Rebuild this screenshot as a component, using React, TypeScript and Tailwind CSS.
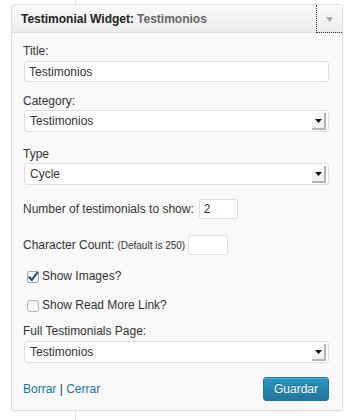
import React from "react";

const font = { fontFamily: '"Liberation Sans", Arial, Helvetica, sans-serif' };

function SelectBox({ value }: { value: string }) {
  return (
    <div className="relative h-[22px] w-full rounded-[3px] border border-[#dfdfdf] bg-white">
      <span className="absolute left-[5px] top-[3px] text-[12px] leading-[15px] text-[#333]">{value}</span>
      <span className="absolute right-[2px] top-[2px] bottom-[1px] flex w-[14px] items-center justify-center border-r-2 border-b-2 border-[#b5b5b5] bg-gradient-to-b from-[#ffffff] to-[#efefef]">
        <svg width="7" height="4" viewBox="0 0 7 4">
          <path d="M0 0 L7 0 L3.5 4 Z" fill="#111" />
        </svg>
      </span>
    </div>
  );
}

export default function App() {
  return (
    <div className="flex h-[420px] w-[354px] flex-col bg-white" style={font}>
      <div className="ml-[75px] h-[4px] shrink-0 border-l border-[#dfdfdf]" />
      <div className="ml-[11px] w-[332px] shrink-0 rounded-[3px] border border-[#dfdfdf] bg-[#f9f9f9] shadow-[0_1px_1px_rgba(0,0,0,0.04)]">
        <div className="flex h-[28px] items-stretch justify-between rounded-t-[3px] border-b border-[#dfdfdf] bg-gradient-to-b from-[#fafafa] to-[#ececec]">
          <div className="flex items-center pl-[9px] text-[12px] font-bold text-[#222]">
            Testimonial Widget:<span className="ml-[3px] text-[#666]">Testimonios</span>
          </div>
          <div className="mb-[-1px] flex w-[26px] items-center justify-center border-l border-b border-dotted border-[#333]">
            <svg width="7" height="5" viewBox="0 0 7 5" className="ml-[-1px] mt-[1px]">
              <path d="M0 0 L7 0 L3.5 5 Z" fill="#aaa" />
            </svg>
          </div>
        </div>
        <div className="flex flex-col pl-[11px] pr-[13px] pt-[11px] pb-[9px] text-[12px] text-[#333]">
          <label className="leading-[15px]">Title:</label>
          <div className="ml-px mt-[2px] flex h-[21px] items-center rounded-[3px] border border-[#dfdfdf] bg-white pl-[4px] text-[12px] text-[#333]">
            Testimonios
          </div>

          <label className="mt-[12px] leading-[15px]">Category:</label>
          <div className="ml-px mt-[1px]">
            <SelectBox value="Testimonios" />
          </div>

          <label className="mt-[15px] leading-[15px]">Type</label>
          <div className="ml-px mt-[1px]">
            <SelectBox value="Cycle" />
          </div>

          <div className="mt-[14px] flex items-center">
            <span className="leading-[15px]">Number of testimonials to show:</span>
            <div className="ml-[5px] flex h-[20px] w-[39px] items-center rounded-[2px] border border-[#dfdfdf] bg-white pl-[4px]">2</div>
          </div>

          <div className="mt-[16px] flex items-center">
            <span className="leading-[15px]">Character Count:</span>
            <span className="ml-[3px] text-[10px] leading-[15px]">(Default is 250)</span>
            <div className="ml-[3px] h-[20px] w-[40px] rounded-[2px] border border-[#dfdfdf] bg-white" />
          </div>

          <div className="mt-[14px] flex h-[15px] items-center">
            <svg width="12" height="12" viewBox="0 0 12 12" className="ml-[4px]">
              <rect x="0.5" y="0.5" width="11" height="11" rx="2" fill="#fff" stroke="#9aa0a6" />
              <path d="M2.3 6.2 L4.8 8.9 L10.4 1.6" fill="none" stroke="#1d4f91" strokeWidth="2.2" strokeLinecap="round" strokeLinejoin="round" />
            </svg>
            <span className="ml-[3px] leading-[15px]">Show Images?</span>
          </div>

          <div className="mt-[14px] flex h-[15px] items-center">
            <span className="ml-[4px] block h-[12px] w-[12px] rounded-[3px] border border-[#b4b4b4] bg-gradient-to-b from-[#f0f0f0] to-[#ffffff]" />
            <span className="ml-[3px] leading-[15px]">Show Read More Link?</span>
          </div>

          <label className="mt-[11px] leading-[15px]">Full Testimonials Page:</label>
          <div className="ml-px mt-[2px]">
            <SelectBox value="Testimonios" />
          </div>

          <div className="mt-[14px] flex items-center justify-between">
            <div className="text-[12px] leading-[15px] text-[#21759b]">
              Borrar <span className="text-[#333]">|</span> Cerrar
            </div>
            <button className="h-[24px] w-[66px] rounded-[3px] border border-[#21759b] bg-gradient-to-b from-[#2a95c5] to-[#21759b] text-[12px] text-white [text-shadow:0_-1px_0_rgba(0,0,0,0.3)] shadow-[inset_0_1px_0_rgba(120,200,230,0.5)]">
              Guardar
            </button>
          </div>
        </div>
      </div>
      <div className="ml-[75px] flex-1 border-l border-[#dfdfdf]" />
    </div>
  );
}
